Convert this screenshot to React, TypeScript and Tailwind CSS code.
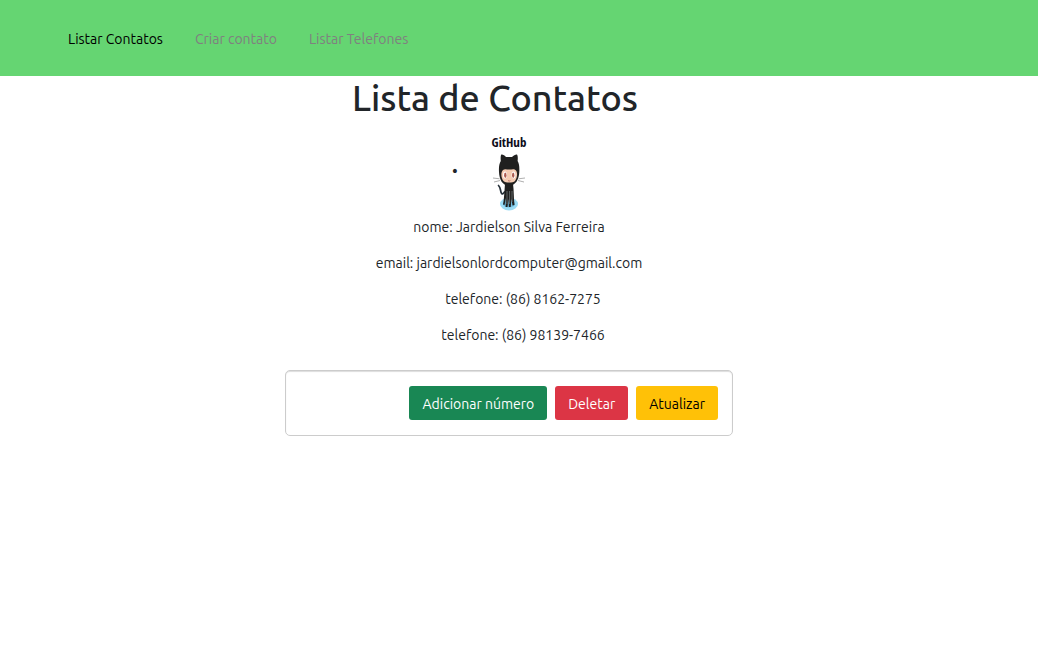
const links = ["Listar Contatos", "Criar contato", "Listar Telefones"];

function Octocat() {
  return (
    <svg viewBox="0 0 34 80" className="h-20 w-[34px] shrink-0 overflow-visible" role="img" aria-label="GitHub">
      <text x="17" y="16" textAnchor="middle" fill="#0d0d1a" fontSize="13" fontWeight="700" fontFamily="'Ubuntu Condensed', 'Open Sans Condensed', 'DejaVu Sans Condensed', sans-serif">
        GitHub
      </text>
      <ellipse cx="17" cy="73" rx="9" ry="6.5" fill="#9bdcf5" />
      <ellipse cx="17" cy="73" rx="6" ry="3.5" fill="#72bfe2" />
      <path d="M12.5 61C10 65 9 62 8.5 59C8.2 57 7.500 55.500 6.500 54.500" fill="none" stroke="#27313a" strokeWidth="1.700" strokeLinecap="round" />
      <path d="M13 53H21C22 59 21.500 66 22.500 74L20.500 74.500L19.500 68L18.700 76H16.800L16.500 68L15.500 76H13.600L14 67L12.500 74L11 73.500C12 70 12.500 59 13 53Z" fill="#20201f" />
      <path d="M15 60V73M17.600 60V73M20 60V71" stroke="#8d979b" strokeWidth=".6" />
      <path d="M9 24C10 22.800 12.500 24.500 14 26H20C22 24.500 24.500 22.800 25.300 24C26 26 25.800 28 25.600 30C27.300 33 27.500 36 27.300 41C27 48 24 54.500 17 54.500C10 54.500 7.300 48 7 41C6.700 36 7.200 33 8.800 30C8.600 28 8.500 26 9 24Z" fill="#20201f" />
      <path d="M11 39C12.500 37.500 15 38.500 17.200 38.500C20 38.500 22.500 37.500 24 39.500C26 42 25 47.500 23 50C21 52 13.500 52 11.500 50C9 47 8.500 41.500 11 39Z" fill="#f4cbb2" />
      <ellipse cx="13" cy="44" rx="1.900" ry="3.600" fill="#fff" />
      <ellipse cx="21.500" cy="44" rx="1.900" ry="3.600" fill="#fff" />
      <ellipse cx="13.300" cy="44.200" rx="1.200" ry="2.800" fill="#ad5c51" />
      <ellipse cx="21.200" cy="44.200" rx="1.200" ry="2.800" fill="#ad5c51" />
      <path d="M16 49.500Q17.200 50.700 18.400 49.500" fill="none" stroke="#ad5c51" strokeWidth=".7" />
      <path d="M1 47L7.500 47.800M2 51L8 49.500M33 47L26.500 47.800M32 51L26 49.500" stroke="#a6a6a6" strokeWidth=".9" />
    </svg>
  );
}

export default function App() {
  return (
    <div className="bg-white font-['Ubuntu','Noto_Sans',sans-serif] text-sm text-[#212529]">
      <nav className="flex h-19 items-center gap-8 bg-[#65d572] px-17 pt-0.5">
        {links.map((label, i) => (
          <a key={label} href="#" className={i === 0 ? "text-black" : "text-[#808080]"}>
            {label}
          </a>
        ))}
      </nav>
      <main className="pr-12">
        <div className="mx-auto w-[476px] max-w-full">
          <h1 className="text-center text-4xl leading-[44px] font-[550]">Lista de Contatos</h1>
          <ul className="mt-[11px] pl-7">
            <li className="flex flex-col items-stretch text-center">
              <div className="flex items-center justify-center">
                <span className="w-10 text-left text-base leading-6">•</span>
                <Octocat />
                <span className="w-10" />
              </div>
              <p className="mt-[5px] mb-3.5 leading-[22px]">nome: Jardielson Silva Ferreira</p>
              <p className="mb-3.5 leading-[22px]">email: jardielsonlordcomputer@gmail.com</p>
              <ul className="pl-7">
                <li className="mb-3.5 leading-[22px]">telefone: (86) 8162-7275</li>
                <li className="leading-[22px]">telefone: (86) 98139-7466</li>
              </ul>
              <div className="mt-6 flex justify-end gap-2 rounded-[5px] border border-[#ccc] p-3.5 shadow-[inset_0_1px_1px_#ddd]">
                <button type="button" className="my-px h-[34px] rounded-[3px] bg-[#198754] px-[13px] pt-0.5 text-white">Adicionar número</button>
                <button type="button" className="my-px h-[34px] rounded-[3px] bg-[#dc3545] px-[13px] pt-0.5 text-white">Deletar</button>
                <button type="button" className="my-px h-[34px] rounded-[3px] bg-[#ffc107] px-[13px] pt-0.5 text-black">Atualizar</button>
              </div>
            </li>
          </ul>
        </div>
      </main>
    </div>
  );
}
